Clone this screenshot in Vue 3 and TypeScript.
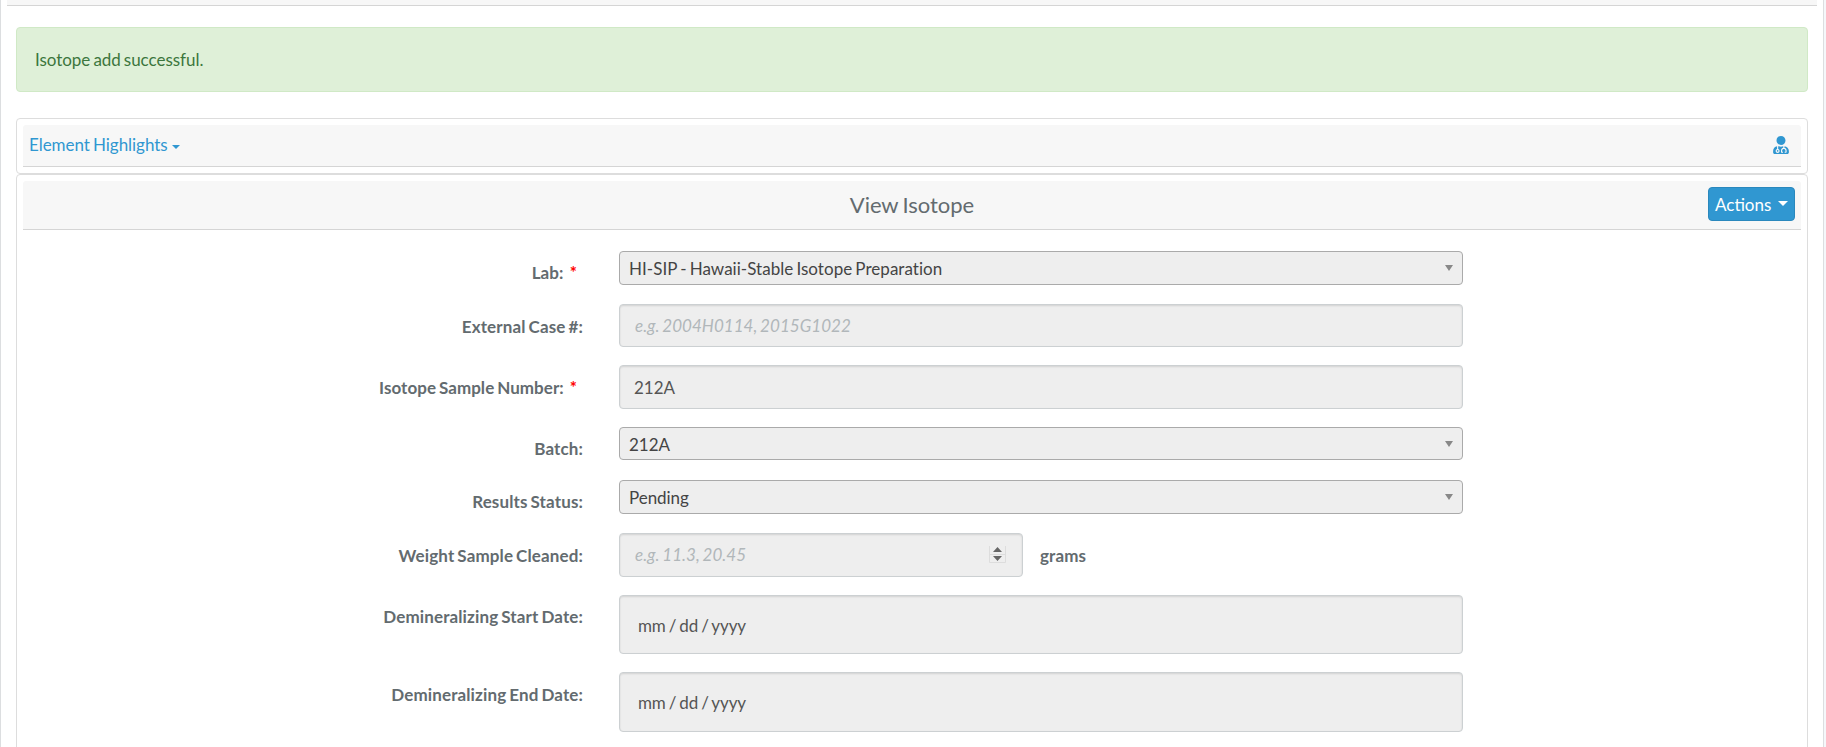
<script setup lang="ts">
type Kind = 'select' | 'text' | 'number' | 'date'

interface Field {
  id: string
  label: string
  kind: Kind
  value?: string
  placeholder?: string
  required?: boolean
  unit?: string
}

const fields: Field[] = [
  { id: 'lab', label: 'Lab:', kind: 'select', value: 'HI-SIP - Hawaii-Stable Isotope Preparation', required: true },
  { id: 'case', label: 'External Case #:', kind: 'text', placeholder: 'e.g. 2004H0114, 2015G1022' },
  { id: 'sample', label: 'Isotope Sample Number:', kind: 'text', value: '212A', required: true },
  { id: 'batch', label: 'Batch:', kind: 'select', value: '212A' },
  { id: 'status', label: 'Results Status:', kind: 'select', value: 'Pending' },
  { id: 'weight', label: 'Weight Sample Cleaned:', kind: 'number', placeholder: 'e.g. 11.3, 20.45', unit: 'grams' },
  { id: 'start', label: 'Demineralizing Start Date:', kind: 'date', value: 'mm / dd / yyyy' },
  { id: 'end', label: 'Demineralizing End Date:', kind: 'date', value: 'mm / dd / yyyy' },
]
</script>

<template>
  <div class="page">
    <div class="topbar"></div>
    <main class="content">
      <div class="alert" role="status"><span>Isotope add successful.</span></div>

      <section class="panel highlights">
        <header class="bar">
          <a class="toggle">Element Highlights<svg class="small-caret" viewBox="0 0 8 4"><path d="M0 0h8L4 4z" /></svg></a>
          <svg class="user" viewBox="0 0 448 512" aria-label="User">
            <path d="M224 256c70.7 0 128-57.3 128-128S294.7 0 224 0 96 57.3 96 128s57.3 128 128 128zM104 424c0 13.3 10.7 24 24 24s24-10.7 24-24-10.7-24-24-24-24 10.7-24 24zm216-135.4v49c36.5 7.4 64 39.8 64 78.4v41.7c0 7.6-5.4 14.2-12.9 15.7l-32.2 6.4c-4.3.9-8.5-1.9-9.4-6.3l-3.1-15.7c-.9-4.3 1.9-8.6 6.3-9.4l19.3-3.9V416c0-62.8-96-65.1-96 1.9v26.7l19.3 3.9c4.3.9 7.1 5.1 6.3 9.4l-3.1 15.7c-.9 4.3-5.1 7.1-9.4 6.3l-31.2-4.2c-7.9-1.1-13.8-7.8-13.8-15.9V416c0-38.6 27.5-70.9 64-78.4v-45.2c-2.2.7-4.4 1.1-6.6 1.9-18 6.3-37.3 9.8-57.4 9.8s-39.4-3.5-57.4-9.8c-7.4-2.6-14.9-4.2-22.6-5.2v81.6c23.1 6.9 40 28.1 40 53.4 0 30.9-25.1 56-56 56s-56-25.1-56-56c0-25.3 16.9-46.5 40-53.4v-80.4C48.5 301 0 355.8 0 422.4v44.8C0 491.9 20.1 512 44.8 512h358.4c24.7 0 44.8-20.1 44.8-44.8v-44.8c0-72-56.8-130.3-128-133.8z" />
          </svg>
        </header>
      </section>

      <section class="panel detail">
        <header class="bar title-bar">
          <h1>View Isotope</h1>
          <button class="actions" type="button"><span>Actions</span><svg class="caret" viewBox="0 0 10 5"><path d="M0 0h10L5 5z" /></svg></button>
        </header>

        <div class="form">
          <div v-for="f in fields" :key="f.id" class="row" :class="[f.kind, f.id]">
            <label>{{ f.label }}<span v-if="f.required" class="star">*</span></label>
            <div class="control">
              <span class="value" :class="{ placeholder: !f.value }">{{ f.value ?? f.placeholder }}</span>
              <svg v-if="f.kind === 'select'" class="arrow" viewBox="0 0 8 6"><path d="M0 0h8L4 6z" /></svg>
              <svg v-if="f.kind === 'number'" class="spinner" viewBox="0 0 17 17">
                <path class="frame" d="M.5 0v16.5h16V0M0 8.5h17" />
                <path class="tick" d="M4 6h9L8.5 1zM4 10h9l-4.5 5z" />
              </svg>
            </div>
            <span v-if="f.unit" class="unit">{{ f.unit }}</span>
          </div>
        </div>
      </section>
    </main>
  </div>
</template>

<style>
html,
body {
  margin: 0;
  overflow: hidden;
  background: #f5f7fa;
}
</style>

<style scoped>
.page {
  box-sizing: border-box;
  width: 1824px;
  height: 747px;
  overflow: hidden;
  background: #fff;
  border: solid #dcdee0;
  border-width: 0 1px;
  font: 17px/24px Lato, sans-serif;
  letter-spacing: -0.04px;
  word-spacing: -1.2px;
  color: #636b6f;
}
.topbar {
  height: 5px;
  margin: 0 6px;
  background: #f7f7f7;
  border-bottom: 1px solid #d5d5d5;
}
.content {
  margin: 21px 15px 0;
}
.alert {
  box-sizing: border-box;
  height: 65px;
  padding: 20px 18px;
  border: 1px solid #d0e9c6;
  border-radius: 4px;
  background: #dff0d8;
  color: #3c763d;
}
.panel {
  box-sizing: border-box;
  border: 1px solid #ddd;
  border-radius: 4px;
  padding: 6px;
}
.highlights {
  height: 56px;
  margin-top: 26px;
}
.detail {
  height: 700px;
}
.bar {
  box-sizing: border-box;
  display: flex;
  height: 42px;
  border-bottom: 1px solid #d5d5d5;
  border-radius: 3px 3px 0 0;
  background: #f7f7f7;
}
.highlights .bar {
  justify-content: space-between;
  padding: 8px 12px 0 6px;
}
.toggle {
  color: #3097d1;
}
.small-caret {
  width: 8px;
  height: 4px;
  margin-left: 4px;
  vertical-align: 2px;
  fill: currentColor;
}
.user {
  width: 16px;
  height: 18px;
  margin-top: 2.5px;
  fill: #3097d1;
}
.title-bar {
  display: grid;
  grid-template-columns: 87px 1fr 87px;
  height: 49px;
  padding: 6px;
}
h1 {
  grid-column: 2;
  margin: 3px 0 0;
  font-size: 22px;
  font-weight: 400;
  line-height: 30px;
  text-align: center;
}
.actions {
  box-sizing: border-box;
  display: flex;
  align-items: center;
  justify-content: space-between;
  height: 34px;
  padding: 0 6px;
  border: 1px solid #2a88bd;
  border-radius: 4px;
  background: #3097d1;
  color: #fff;
  font: inherit;
}
.actions span {
  margin-top: 2px;
}
.caret {
  width: 10px;
  height: 5px;
  margin-top: -2px;
  fill: currentColor;
}
.form {
  display: grid;
  grid-template-rows: 53px 61px 62px 53px 53px 62px 77px 78px;
  padding-top: 21px;
}
.row {
  display: grid;
  grid-template-columns: 560px 844px 1fr;
  column-gap: 36px;
}
label,
.unit {
  padding-top: 10px;
  font-weight: 700;
  letter-spacing: 0.13px;
  word-spacing: -1.3px;
}
label {
  text-align: right;
}
.text label,
.number label,
.number .unit,
.end label {
  padding-top: 11px;
}
.sample label {
  letter-spacing: 0.05px;
}
.star {
  margin: 0 6px;
  color: #f00;
}
.control {
  box-sizing: border-box;
  display: flex;
  justify-content: space-between;
  margin-bottom: 18px;
  padding: 9px 14px 0 15px;
  border: 1px solid #ccd0d2;
  border-radius: 4px;
  background: #eee;
  box-shadow: inset 0 1px 2px rgba(0, 0, 0, 0.12);
  color: #555;
}
.select .control {
  margin-bottom: 19px;
  padding: 5px 9px 0;
  border-color: #aaa;
  box-shadow: none;
  color: #444;
}
.lab .value {
  letter-spacing: 0.03px;
}
.batch .control {
  margin-bottom: 20px;
}
.sample .control {
  padding: 10px 14px 0;
}
.date .control {
  padding: 18px 18px 0;
  letter-spacing: -0.12px;
}
.placeholder {
  color: #b1b7ba;
  font-style: italic;
  letter-spacing: 0.03px;
}
.arrow {
  width: 8px;
  height: 6px;
  margin-top: 8px;
  fill: #888;
}
.number {
  grid-template-columns: 560px 404px 1fr;
}
.number .control {
  padding-right: 16px;
}
.spinner {
  width: 17px;
  height: 17px;
  margin-top: 3px;
}
.frame {
  fill: none;
  stroke: #ddd;
}
.tick {
  fill: #666;
}
.unit {
  margin-left: -19px;
}
</style>
